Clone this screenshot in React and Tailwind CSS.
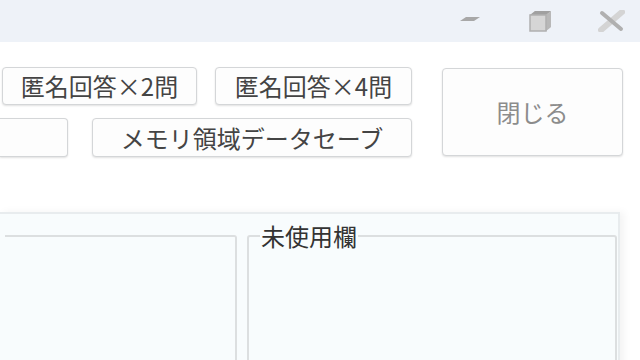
const font = { fontFamily: '"Noto Sans CJK JP", "Noto Sans", sans-serif' };

const WinButton = ({ children, className = '' }) => (
  <button
    className={`flex items-center justify-center rounded-[4px] border border-[#d4d6d8] bg-[#fdfdfd] text-[24px] leading-none shadow-[0_1px_2px_rgba(0,0,0,0.12)] ${className}`}
  >
    {children}
  </button>
);

const App = () => {
  return (
    <div className="relative h-[360px] w-[640px] overflow-hidden bg-white" style={font}>
      {/* title bar */}
      <div className="flex h-[42px] items-center justify-end bg-[#eef2f8] pr-[15px]">
        <svg width="24" height="22" viewBox="0 0 24 22" className="blur-[0.6px]">
          <path d="M2 11 L8 7 L22 7 L16 11 Z" fill="#a8a8a8" />
        </svg>
        <svg width="26" height="22" viewBox="0 0 26 22" className="ml-[45px] blur-[0.6px]">
          <path d="M3 5 L8 1 L24 1 L24 17 L19 21 L3 21 Z" fill="#d6d6d6" />
          <path d="M3 5 L8 1 L24 1 L19 5 Z" fill="#a0a0a0" />
          <path d="M19 5 L24 1 L24 17 L19 21 Z" fill="#b8b8b8" />
          <path d="M3 5 L19 5 L19 21 L3 21 Z" fill="none" stroke="#b0b0b0" strokeWidth="1.5" />
        </svg>
        <svg width="27" height="22" viewBox="0 0 27 22" className="ml-[45px] blur-[0.6px]">
          <path d="M3 20 L24 2" stroke="#d4d4d4" strokeWidth="6" strokeLinecap="round" />
          <path d="M4 3 L23 19" stroke="#b0b0b0" strokeWidth="4" strokeLinecap="round" />
        </svg>
      </div>

      {/* button area */}
      <div className="flex pt-[25px]">
        <div className="flex flex-col gap-[13px] text-[#444]">
          <div className="flex gap-[18px] pl-[2px]">
            <WinButton className="h-[38px] w-[195px]">匿名回答×2問</WinButton>
            <WinButton className="h-[38px] w-[197px]">匿名回答×4問</WinButton>
          </div>
          <div className="flex gap-[24px]">
            <WinButton className="h-[39px] w-[68px] rounded-l-none border-l-0" />
            <WinButton className="h-[39px] w-[320px]">メモリ領域データセーブ</WinButton>
          </div>
        </div>
        <WinButton className="ml-[30px] mt-[1px] h-[88px] w-[181px] text-[#8c8c8c]">閉じる</WinButton>
      </div>

      {/* lower panel */}
      <div className="mt-[55px] h-[200px] w-[620px] border-t-2 border-r-2 border-[#e8ecee] bg-[#f8fcfd] pt-[8px] shadow-[4px_0_8px_rgba(0,0,0,0.05)]">
        <div className="flex gap-[10px]">
          <fieldset className="h-[200px] w-[237px] rounded-tr-[3px] border-2 border-l-0 border-[#dcdfe0]">
            <legend className="invisible text-[24px] leading-[28px]">&nbsp;</legend>
          </fieldset>
          <fieldset className="h-[200px] w-[370px] rounded-t-[3px] border-2 border-[#dcdfe0]">
            <legend className="ml-[11px] px-[1px] text-[24px] leading-[28px] text-[#333]">未使用欄</legend>
          </fieldset>
        </div>
      </div>
    </div>
  );
};

export default App;
